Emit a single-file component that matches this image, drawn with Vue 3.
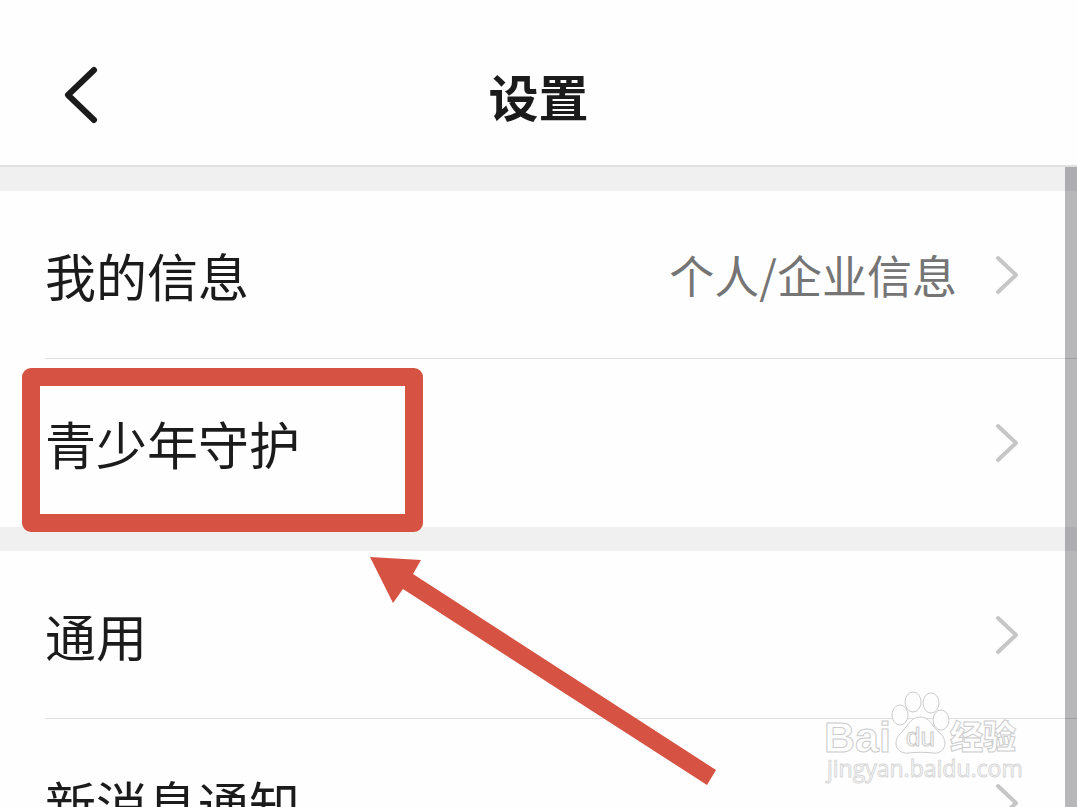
<script setup>
const groups = [
  [
    { label: '我的信息', value: '个人/企业信息' },
    { label: '青少年守护', highlighted: true },
  ],
  [
    { label: '通用', pointer: true },
    { label: '新消息通知' },
  ],
]
</script>

<template>
  <div class="page">
    <header class="header">
      <button class="back" type="button" aria-label="返回">
        <svg width="36" height="60" viewBox="0 0 36 60" aria-hidden="true">
          <path d="M31 5 L5 30 L31 55" />
        </svg>
      </button>
      <h1 class="title">设置</h1>
    </header>

    <main class="content">
      <ul v-for="(group, g) in groups" :key="g" class="group">
        <li v-for="item in group" :key="item.label" class="item">
          <a class="row" href="#">
            <span class="label">{{ item.label }}</span>
            <span v-if="item.value" class="value">{{ item.value }}</span>
            <svg class="chevron" width="26" height="42" viewBox="0 0 26 42" aria-hidden="true">
              <path d="M4 4 L22 21 L4 38" />
            </svg>
          </a>
          <span v-if="item.highlighted" class="highlight"></span>
          <svg v-if="item.pointer" class="pointer" width="350" height="232" viewBox="0 0 350 232" aria-hidden="true">
            <path d="M0 0 L51 3 L43 17 L346 213 L337 228 L33 32 L23 46 Z" />
          </svg>
        </li>
      </ul>
      <div class="scrollbar"></div>
    </main>

    <svg class="watermark" width="210" height="106" viewBox="0 0 210 106" role="img" aria-label="Baidu经验">
      <g class="brand">
        <text x="4" y="67" font-size="43">Bai</text>
        <path d="M100 32 C107 32 111 37 114 42 C118 47 125 51 125 58 C125 65 119 69 113 68 C105 67 97 67 89 68 C82 69 76 65 76 58 C76 51 82 48 86 42 C90 37 93 32 100 32 Z" />
        <ellipse cx="80" cy="30" rx="8" ry="10" />
        <ellipse cx="93" cy="17" rx="8" ry="10" />
        <ellipse cx="111" cy="18" rx="8" ry="10" />
        <ellipse cx="121" cy="35" rx="8" ry="10" />
        <text class="du" x="86" y="61" font-size="26">du</text>
        <text class="cjk" x="130" y="64" font-size="33">经验</text>
        <text class="site" x="7" y="92" font-size="23">jingyan.baidu.com</text>
      </g>
    </svg>
  </div>
</template>

<style>
body {
  margin: 0;
}
</style>

<style scoped>
.page {
  position: relative;
  display: flex;
  flex-direction: column;
  height: 100vh;
  overflow: hidden;
  background: #fefefe;
  color: #1b1b1b;
  font-family: "Noto Sans CJK SC", sans-serif;
}

.header {
  display: grid;
  grid-template-columns: 1fr auto 1fr;
  align-items: center;
  flex: none;
  box-sizing: border-box;
  height: 167px;
  padding: 24px 63px 0;
  border-bottom: 2px solid #e0e0e0;
}

.back {
  display: flex;
  justify-self: start;
  padding: 0;
  border: 0;
  background: none;
  cursor: pointer;
}

.back path {
  fill: none;
  stroke: #1b1b1b;
  stroke-width: 6;
  stroke-linecap: round;
  stroke-linejoin: round;
}

.title {
  margin: 0;
  font-size: 50px;
  font-weight: 700;
  line-height: 72px;
}

.content {
  position: relative;
  flex: 1;
  min-height: 0;
}

.group {
  margin: 0;
  padding: 0;
  border-top: 24px solid #f0f0f1;
  list-style: none;
}

.item {
  position: relative;
}

.item + .item::before {
  content: "";
  display: block;
  height: 1px;
  margin-left: 45px;
  background: #dedede;
}

.row {
  display: flex;
  align-items: center;
  height: 168px;
  padding: 0 57px 0 45px;
  color: inherit;
  text-decoration: none;
}

.item:first-child .row {
  height: 167px;
}

.label {
  flex: 1;
  font-size: 51px;
  line-height: 72px;
}

.value {
  margin-right: 37px;
  color: #757575;
  font-size: 45px;
  line-height: 72px;
}

.chevron path {
  fill: none;
  stroke: #c6c6c6;
  stroke-width: 4;
  stroke-linecap: round;
  stroke-linejoin: round;
}

.highlight {
  position: absolute;
  top: 10px;
  left: 22px;
  box-sizing: border-box;
  width: 401px;
  height: 164px;
  border: 18px solid #d65243;
  border-radius: 9px;
  pointer-events: none;
  z-index: 1;
}

.pointer {
  position: absolute;
  top: 6px;
  left: 370px;
  fill: #d65243;
  pointer-events: none;
  z-index: 1;
}

.scrollbar {
  position: absolute;
  top: 0;
  right: 0;
  bottom: 0;
  width: 12px;
  background: rgba(0, 0, 10, 0.28);
}

.watermark {
  position: absolute;
  right: 47px;
  bottom: 16px;
  pointer-events: none;
}

.brand {
  fill: #fefefe;
  stroke: #cccccc;
  stroke-width: 1;
  font-family: "Liberation Sans", Arial, sans-serif;
  font-weight: 700;
}

.du {
  font-weight: 400;
}

.cjk {
  font-family: "Noto Sans CJK SC", sans-serif;
  font-weight: 900;
}

.site {
  font-family: "Open Sans", sans-serif;
  font-weight: 400;
  stroke: #d8d8d8;
}
</style>
